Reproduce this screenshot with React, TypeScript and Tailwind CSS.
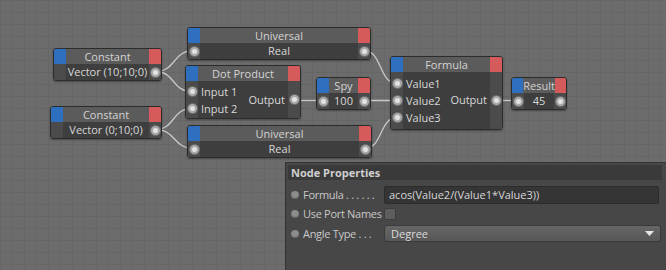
import React from "react";

const FONT = "font-['Open_Sans','Lato',sans-serif]";

function PortDot() {
  return (
    <div className="w-[9px] h-[9px] rounded-full bg-[#e2e2e2] border-[2px] border-[#a9a9a9] shadow-[0_0_0_1px_#6f6f6f]" />
  );
}

function Header({ title }: { title: string }) {
  return (
    <div className="flex h-[15px]">
      <div className="w-[12px] bg-[#2f6fc0]" />
      <div className="flex-1 bg-[#5b5b5b] text-center text-[11px] leading-[15px] text-[#d4d4d4]">{title}</div>
      <div className="w-[12px] bg-[#d45a5c]" />
    </div>
  );
}

function SimpleNode({
  pos,
  title,
  value,
  leftPort,
}: {
  pos: string;
  title: string;
  value: string;
  leftPort: boolean;
}) {
  return (
    <div className={`absolute ${pos} rounded-[3px] border border-[#2c2c2c] overflow-hidden flex flex-col shadow-[0_1px_2px_rgba(0,0,0,0.35)]`}>
      <Header title={title} />
      <div className="flex h-[16px]">
        <div className="w-[12px] bg-[#4b4b4b] flex items-center justify-center">{leftPort && <PortDot />}</div>
        <div className="flex-1 bg-[#3e3e3e] text-center text-[11px] leading-[16px] text-[#d8d8d8] whitespace-nowrap">{value}</div>
        <div className="w-[12px] bg-[#4b4b4b] flex items-center justify-center">
          <PortDot />
        </div>
      </div>
    </div>
  );
}

function MultiNode({
  pos,
  title,
  inputs,
  pad,
}: {
  pos: string;
  title: string;
  inputs: string[];
  pad: string;
}) {
  return (
    <div className={`absolute ${pos} rounded-[3px] border border-[#2c2c2c] overflow-hidden flex flex-col shadow-[0_1px_2px_rgba(0,0,0,0.35)]`}>
      <Header title={title} />
      <div className="flex">
        <div className={`w-[12px] bg-[#4b4b4b] flex flex-col ${pad}`}>
          {inputs.map((n) => (
            <div key={n} className="h-[17px] flex items-center justify-center">
              <PortDot />
            </div>
          ))}
        </div>
        <div className={`flex-1 bg-[#3e3e3e] flex ${pad}`}>
          <div className="flex flex-col pl-[3px]">
            {inputs.map((n) => (
              <div key={n} className="h-[17px] text-[11px] leading-[17px] text-[#d8d8d8] whitespace-nowrap">
                {n}
              </div>
            ))}
          </div>
          <div className="flex-1 flex items-center justify-end pr-[3px] text-[11px] text-[#d8d8d8]">Output</div>
        </div>
        <div className="w-[12px] bg-[#4b4b4b] flex items-center justify-center">
          <PortDot />
        </div>
      </div>
    </div>
  );
}

function wire(x1: number, y1: number, x2: number, y2: number) {
  const d = Math.max(14, (x2 - x1) * 0.55);
  return `M ${x1} ${y1} C ${x1 + d} ${y1}, ${x2 - d} ${y2}, ${x2} ${y2}`;
}

const WIRES: [number, number, number, number][] = [
  [155, 71.5, 194, 50.5],
  [155, 71.5, 192, 91.5],
  [155, 129.5, 192, 108.5],
  [155, 129.5, 194, 148.5],
  [364, 50.5, 397, 83.5],
  [294, 100.5, 323, 100.5],
  [364, 100.5, 397, 100.5],
  [365, 148.5, 397, 117.5],
  [496, 100.5, 518, 100.5],
];

function Row({ label, children }: { label: string; children: React.ReactNode }) {
  return (
    <div className="flex items-center h-[19.5px] pl-[5px] pr-[5px]">
      <div className="w-[8px] h-[8px] rounded-full bg-[#8c8c8c] shadow-[inset_0_-1px_1px_rgba(0,0,0,0.3)]" />
      <div className="ml-[4px] w-[81px] text-[11px] tracking-[-0.3px] text-[#c8c8c8] whitespace-nowrap">{label}</div>
      <div className="flex-1 flex items-center">{children}</div>
    </div>
  );
}

export default function App() {
  return (
    <div
      className={`relative w-[666px] h-[270px] overflow-hidden bg-[#6c6c6c] bg-[linear-gradient(to_right,#666666_1px,transparent_1px),linear-gradient(to_bottom,#666666_1px,transparent_1px)] bg-[size:12px_12px] ${FONT}`}
    >
      <svg className="absolute left-0 top-0" width={666} height={270}>
        {WIRES.map(([a, b, c, d], i) => (
          <path key={i} d={wire(a, b, c, d)} stroke="#c9c9c9" strokeWidth={1.3} fill="none" />
        ))}
      </svg>

      <SimpleNode pos="left-[53px] top-[48px] w-[109px]" title="Constant" value="Vector (10;10;0)" leftPort={false} />
      <SimpleNode pos="left-[50px] top-[106px] w-[112px]" title="Constant" value="Vector (0;10;0)" leftPort={false} />
      <SimpleNode pos="left-[187px] top-[27px] w-[184px]" title="Universal" value="Real" leftPort={true} />
      <SimpleNode pos="left-[187px] top-[125px] w-[185px]" title="Universal" value="Real" leftPort={true} />
      <SimpleNode pos="left-[316px] top-[77px] w-[55px]" title="Spy" value="100" leftPort={true} />
      <SimpleNode pos="left-[511px] top-[77px] w-[56px]" title="Result" value="45" leftPort={true} />
      <MultiNode pos="left-[185px] top-[65px] w-[116px]" title="Dot Product" inputs={["Input 1", "Input 2"]} pad="pt-[2px] pb-[1px]" />
      <MultiNode pos="left-[390px] top-[56px] w-[113px]" title="Formula" inputs={["Value1", "Value2", "Value3"]} pad="py-[3px]" />

      <div className="absolute left-[285px] top-[162px] w-[381px] h-[108px] bg-[#474747] border-t border-l border-[#333333] flex flex-col">
        <div className="mx-[2px] mr-[4px] mt-[2px] h-[15px] bg-[#3a3a3a] px-[3px] text-[11px] leading-[15px] font-bold text-[#cfcfcf]">
          Node Properties
        </div>
        <div className="mt-[5px] flex flex-col">
          <Row label="Formula . . . . . .">
            <div className="flex-1 h-[18px] mr-[2px] bg-[#353535] border border-[#2c2c2c] rounded-[2px] pl-[4px] text-[11px] leading-[16px] text-[#d6d6d6]">
              acos(Value2/(Value1*Value3))
            </div>
          </Row>
          <Row label="Use Port Names">
            <div className="w-[12px] h-[12px] bg-[#5e5e5e] border border-[#3c3c3c] rounded-[2px]" />
          </Row>
          <Row label="Angle Type . . .">
            <div className="flex-1 h-[17px] bg-[linear-gradient(to_bottom,#666666,#575757)] border border-[#3a3a3a] rounded-[3px] pl-[6px] pr-[6px] flex items-center justify-between text-[11px] text-[#dadada]">
              <span>Degree</span>
              <svg width="9" height="5" viewBox="0 0 9 5">
                <path d="M0 0 L9 0 L4.5 5 Z" fill="#e8e8e8" />
              </svg>
            </div>
          </Row>
        </div>
      </div>
    </div>
  );
}
